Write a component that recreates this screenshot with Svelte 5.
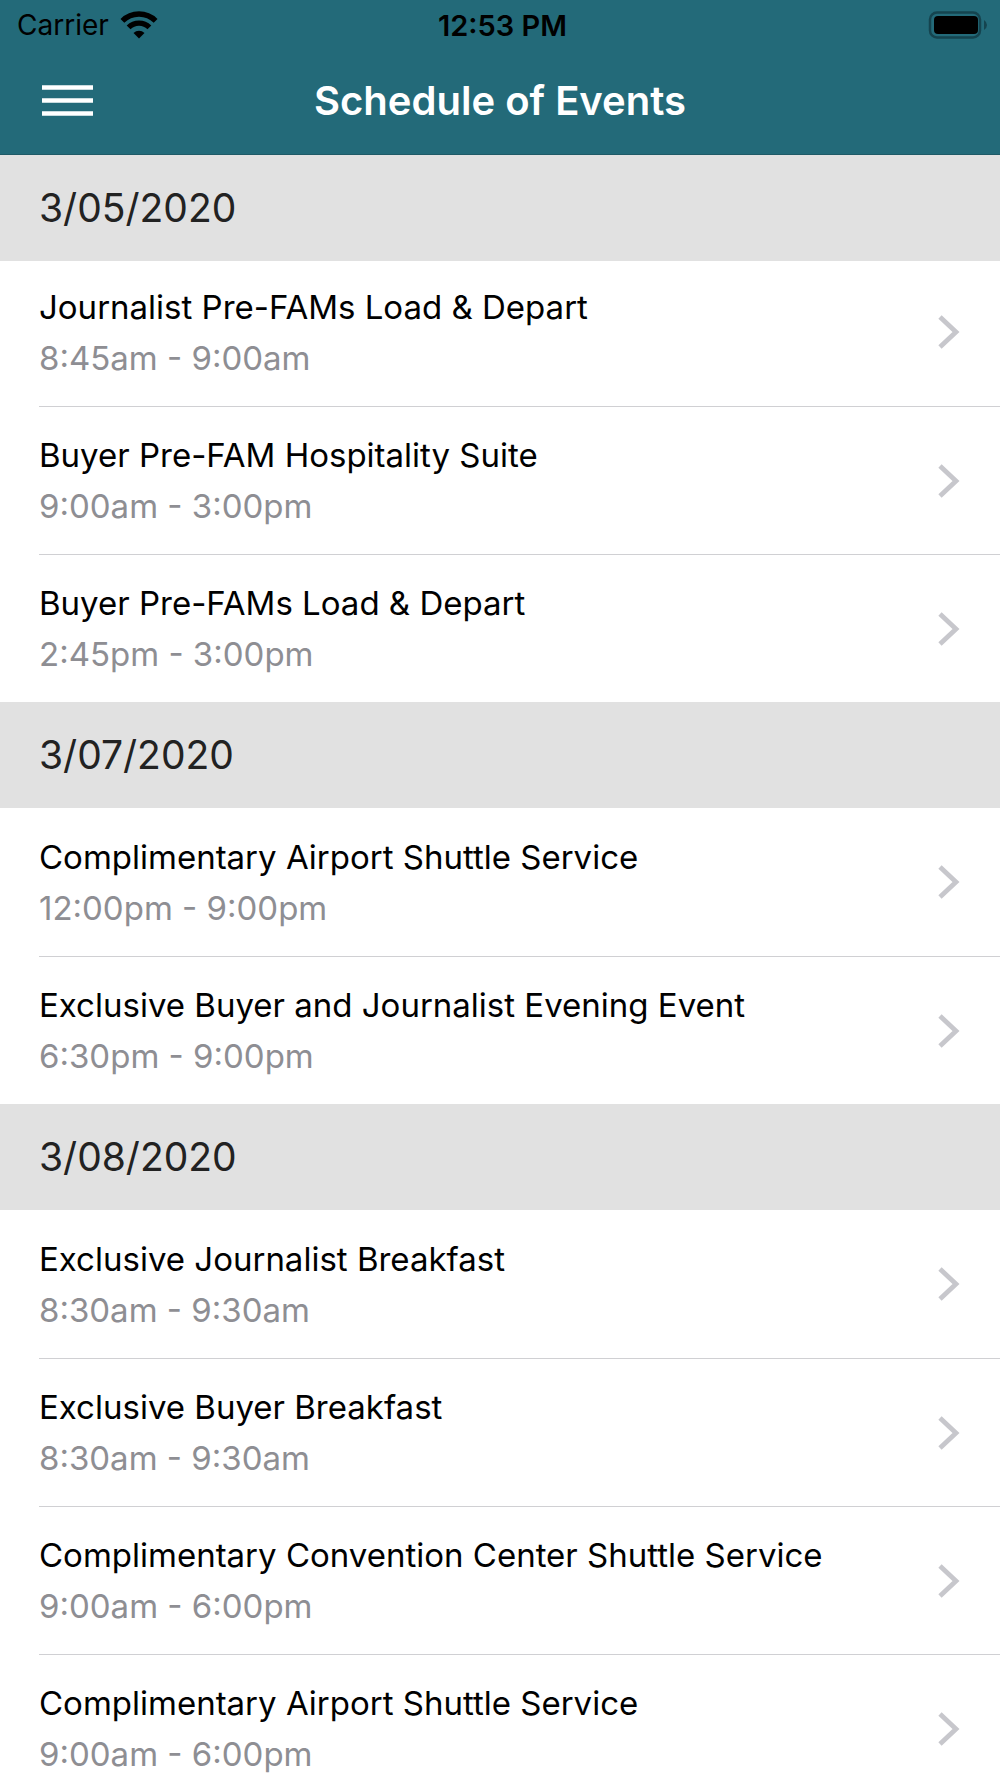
<script lang="ts">
    interface ScheduleEvent {
        title: string;
        time: string;
    }

    interface Day {
        date: string;
        events: ScheduleEvent[];
    }

    const days: Day[] = [
        {
            date: "3/05/2020",
            events: [
                { title: "Journalist Pre-FAMs Load & Depart", time: "8:45am - 9:00am" },
                { title: "Buyer Pre-FAM Hospitality Suite", time: "9:00am - 3:00pm" },
                { title: "Buyer Pre-FAMs Load & Depart", time: "2:45pm - 3:00pm" },
            ],
        },
        {
            date: "3/07/2020",
            events: [
                { title: "Complimentary Airport Shuttle Service", time: "12:00pm - 9:00pm" },
                { title: "Exclusive Buyer and Journalist Evening Event", time: "6:30pm - 9:00pm" },
            ],
        },
        {
            date: "3/08/2020",
            events: [
                { title: "Exclusive Journalist Breakfast", time: "8:30am - 9:30am" },
                { title: "Exclusive Buyer Breakfast", time: "8:30am - 9:30am" },
                { title: "Complimentary Convention Center Shuttle Service", time: "9:00am - 6:00pm" },
                { title: "Complimentary Airport Shuttle Service", time: "9:00am - 6:00pm" },
            ],
        },
    ];
</script>

<div class="app">
    <header>
        <div class="status">
            <div class="carrier">
                <span>Carrier</span>
                <svg width="38" height="28" viewBox="0 0 38 28" aria-hidden="true">
                    <g fill="none" stroke="#000" stroke-width="5.4">
                        <path d="M2.4 9.8 A23.5 23.5 0 0 1 35.6 9.8" />
                        <path d="M8.6 16.4 A14.7 14.7 0 0 1 29.4 16.4" />
                    </g>
                    <path d="M19 27.5 L13.5 22 A8 8 0 0 1 24.5 22 Z" />
                </svg>
            </div>
            <span class="clock">12:53 PM</span>
            <svg class="battery" width="60" height="28" viewBox="0 0 60 28" aria-hidden="true">
                <rect x="2" y="1.5" width="50" height="25" rx="7" fill="none" stroke="#15444f" stroke-width="2.5" />
                <rect x="6" y="5" width="44" height="18" rx="4" />
                <path d="M56 9 Q59 11 59 14 Q59 17 56 19 Z" fill="#15444f" />
            </svg>
        </div>
        <div class="navbar">
            <button class="menu" aria-label="Menu">
                <svg width="51" height="31" viewBox="0 0 51 31">
                    <path d="M0 2.5H51M0 15.5H51M0 28.5H51" stroke="#fff" stroke-width="4.5" />
                </svg>
            </button>
            <h1>Schedule of Events</h1>
        </div>
    </header>

    <main>
        {#each days as day (day.date)}
            <section>
                <h2>{day.date}</h2>
                <ul>
                    {#each day.events as event}
                        <li>
                            <button class="event">
                                <span class="details">
                                    <span class="title">{event.title}</span>
                                    <span class="time">{event.time}</span>
                                </span>
                                <svg width="22" height="34" viewBox="0 0 22 34" aria-hidden="true">
                                    <path d="M2 2 L18 17 L2 32" fill="none" stroke="#c7c7cc" stroke-width="4.8" />
                                </svg>
                            </button>
                        </li>
                    {/each}
                </ul>
            </section>
        {/each}
    </main>
</div>

<style>
    .app {
        display: flex;
        flex-direction: column;
        height: 100vh;
        background: #fff;
        color: #000;
        font-family: Inter, "Liberation Sans", sans-serif;
    }

    header {
        flex-shrink: 0;
        background: #236a79;
        border-bottom: 1px solid #1f5a67;
    }

    .status {
        display: grid;
        grid-template-columns: 1fr auto 1fr;
        align-items: center;
        height: 50px;
        padding: 0 12px 0 17px;
        font-size: 28px;
    }

    .carrier {
        display: flex;
        align-items: center;
        gap: 11px;
    }

    .clock {
        font-size: 29px;
        font-weight: 600;
    }

    .battery {
        justify-self: end;
    }

    .navbar {
        display: grid;
        grid-template-columns: 1fr auto 1fr;
        align-items: center;
        height: 101px;
        padding: 0 42px 3px;
    }

    button {
        padding: 0;
        border: none;
        background: none;
        color: inherit;
        font: inherit;
        cursor: pointer;
    }

    .menu {
        display: flex;
        justify-self: start;
    }

    h1 {
        margin: 0;
        color: #fff;
        font-size: 40px;
        font-weight: 600;
        line-height: 48px;
    }

    main {
        flex: 1;
        min-height: 0;
        overflow-y: auto;
        scrollbar-width: none;
    }

    h2 {
        position: relative;
        margin: 0;
        padding: 28px 39px;
        background: #e1e1e1;
        color: #222;
        font-size: 39px;
        font-weight: 400;
        line-height: 50px;
    }

    /* the first date bar covers the top of the list under it */
    section:first-child h2 {
        margin-bottom: -3px;
    }

    ul {
        margin: 0;
        padding: 0 0 0 39px;
        list-style: none;
    }

    li + li {
        border-top: 1px solid #d0d0d3;
    }

    .event {
        display: flex;
        align-items: center;
        justify-content: space-between;
        width: 100%;
        height: 147px;
        padding-right: 40px;
        text-align: left;
    }

    li:first-child .event {
        height: 148px;
    }

    .details {
        display: flex;
        flex-direction: column;
        gap: 7px;
        font-size: 33px;
        line-height: 44px;
    }

    .time {
        color: #8e8e93;
    }
</style>
